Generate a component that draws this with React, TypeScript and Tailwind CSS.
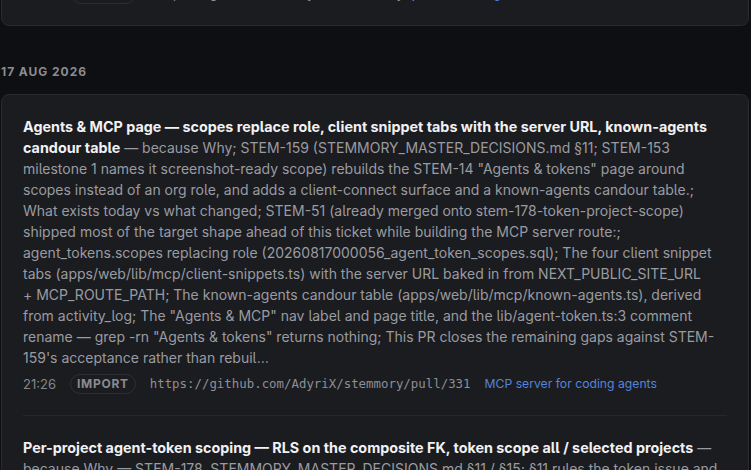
import React from "react";

type Entry = {
  title: string;
  body: string;
  time: string;
  url: string;
  link: string;
};

const entries: Entry[] = [
  {
    title:
      "Agents & MCP page — scopes replace role, client snippet tabs with the server URL, known-agents candour table",
    body:
      'because Why; STEM-159 (STEMMORY_MASTER_DECISIONS.md §11; STEM-153 milestone 1 names it screenshot-ready scope) rebuilds the STEM-14 "Agents & tokens" page around scopes instead of an org role, and adds a client-connect surface and a known-agents candour table.; What exists today vs what changed; STEM-51 (already merged onto stem-178-token-project-scope) shipped most of the target shape ahead of this ticket while building the MCP server route:; agent_tokens.scopes replacing role (20260817000056_agent_token_scopes.sql); The four client snippet tabs (apps/web/lib/mcp/client-snippets.ts) with the server URL baked in from NEXT_PUBLIC_SITE_URL +\u00a0MCP_ROUTE_PATH; The known-agents candour table (apps/web/lib/mcp/known-agents.ts), derived from activity_log; The "Agents & MCP" nav label and page title, and the lib/agent-token.ts:3 comment rename — grep -rn "Agents & tokens" returns nothing; This PR closes the remaining gaps against STEM-\u200b159\'s acceptance rather than rebuil…',
    time: "21:26",
    url: "https://github.com/AdyriX/stemmory/pull/331",
    link: "MCP server for coding agents",
  },
  {
    title:
      "Per-project agent-token scoping — RLS on the composite FK, token scope all / selected projects",
    body:
      "because Why — STEM-178, STEMMORY_MASTER_DECISIONS.md §11 / §15; §11 rules the token issue and scope model for agents, and the composite foreign key keeps each token pinned to its organisation…",
    time: "20:58",
    url: "https://github.com/AdyriX/stemmory/pull/330",
    link: "MCP server for coding agents",
  },
];

function Meta({ time, url, link }: { time: string; url: string; link: string }) {
  return (
    <div className="mt-[6px] flex h-5 items-center gap-[14px] text-[13px] leading-5">
      <span className="text-[#85868b]">{time}</span>
      <span className="flex h-5 items-center rounded-full border border-[#2e2f35] px-[6px] text-[12px] font-bold tracking-[0.06em] text-[#8a8b90]">
        IMPORT
      </span>
      <span className="font-['DejaVu_Sans_Mono',monospace] text-[12.4px] text-[#8e8f94]">
        {url}
      </span>
      <span className="text-[12.2px] text-[#5384dc]">{link}</span>
    </div>
  );
}

function EntryRow({ e, first }: { e: Entry; first: boolean }) {
  return (
    <div className={first ? "py-[21px]" : "border-t border-[#27282d] py-[21px]"}>
      <p className="text-[14px] leading-[21px] text-[#9a9ba0]">
        <span className="text-[14.35px] font-bold text-[#f1f1f3]">{e.title}</span> — {e.body}
      </p>
      <Meta time={e.time} url={e.url} link={e.link} />
    </div>
  );
}

export default function App() {
  return (
    <div className="h-[470px] w-full overflow-hidden bg-[#0e0f12] font-['Inter',sans-serif] [font-feature-settings:'cv05']">
      <div className="-mt-[65px] pl-[1px] pr-[2px]">
        <div className="rounded-lg border border-[#2a2b30] bg-[#1b1c20] px-[21px] py-[21px]">
          <p className="text-[14px] leading-[21px] text-[#9a9ba0]">
            nothing to see here beyond the previous import summary line…
          </p>
          <Meta
            time="21:40"
            url="https://github.com/AdyriX/stemmory/pull/332"
            link="Agent tokens"
          />
        </div>

        <div className="mt-[38px] mb-[14px] h-4 text-[12px] font-bold uppercase leading-4 tracking-[0.08em] text-[#8b8c91]">
          17 Aug 2026
        </div>

        <div className="rounded-lg border border-[#2a2b30] bg-[#1b1c20] px-[21px]">
          {entries.map((e, i) => (
            <EntryRow key={i} e={e} first={i === 0} />
          ))}
        </div>
      </div>
    </div>
  );
}
